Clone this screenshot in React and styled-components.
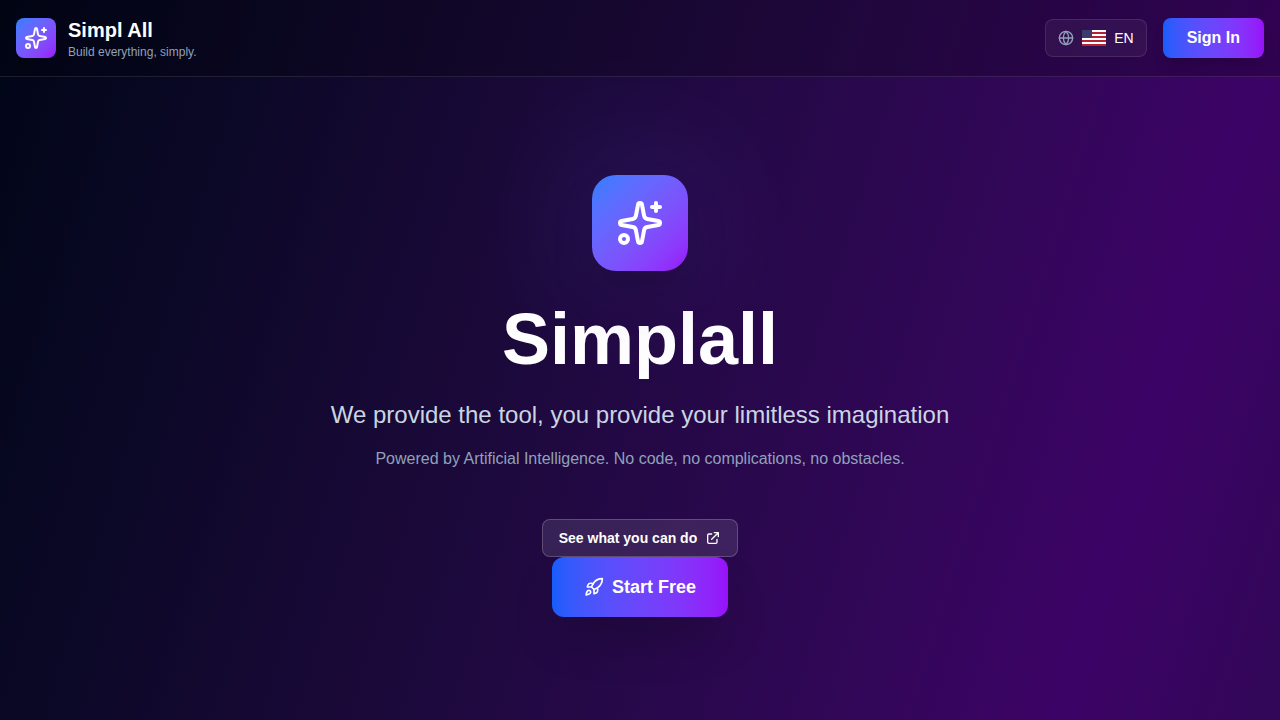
import React from "react";
import styled, { createGlobalStyle } from "styled-components";
import { Sparkles, Globe, Rocket } from "lucide-react";

const GlobalStyle = createGlobalStyle`
  *, *::before, *::after { box-sizing: border-box; }
  body {
    margin: 0;
    font-family: "Liberation Sans", Arial, sans-serif;
    color: #fff;
    background: #020618;
  }
  h1, p { margin: 0; }
  button { font: inherit; color: inherit; border: 0; margin: 0; cursor: pointer; }
`;

const Page = styled.div`
  min-height: 100vh;
  display: flex;
  flex-direction: column;
  overflow: hidden;
  background: linear-gradient(107deg in oklab, #020618 0, #3c0366 1224px, #020618 2448px);
`;

const Header = styled.header`
  display: flex;
  align-items: center;
  justify-content: space-between;
  padding: 16px;
  background: rgba(0, 0, 0, 0.2);
  border-bottom: 1px solid rgba(255, 255, 255, 0.1);
`;

const Brand = styled.div`
  display: flex;
  align-items: center;
  gap: 12px;
`;

const LogoTile = styled.div`
  display: flex;
  align-items: center;
  justify-content: center;
  width: ${(p) => (p.$large ? 96 : 40)}px;
  height: ${(p) => (p.$large ? 96 : 40)}px;
  border-radius: ${(p) => (p.$large ? 24 : 8)}px;
  background: linear-gradient(to bottom right in oklab, #2b7fff, #9810fa);
  box-shadow: ${(p) => (p.$large ? "0 25px 50px -12px rgba(0, 0, 0, 0.25)" : "none")};
`;

const BrandName = styled.div`
  font-size: 20px;
  line-height: 28px;
  font-weight: 700;
`;

const Tagline = styled.div`
  font-size: 12px;
  line-height: 16px;
  color: #90a1b9;
`;

const Actions = styled.div`
  display: flex;
  align-items: center;
  gap: 16px;
`;

const LanguageButton = styled.button`
  display: flex;
  align-items: center;
  gap: 8px;
  padding: 8px 12px;
  border: 1px solid rgba(255, 255, 255, 0.1);
  border-radius: 8px;
  background: rgba(255, 255, 255, 0.05);
  font-size: 14px;
  line-height: 20px;

  > svg:first-child { color: #90a1b9; }
`;

const GradientButton = styled.button`
  display: inline-flex;
  align-items: center;
  justify-content: center;
  gap: 8px;
  padding: ${(p) => (p.$large ? "16px 32px" : "8px 24px")};
  border-radius: ${(p) => (p.$large ? 12 : 8)}px;
  font-size: ${(p) => (p.$large ? 18 : 16)}px;
  line-height: ${(p) => (p.$large ? 28 : 24)}px;
  font-weight: 700;
  background: linear-gradient(to right in oklab, #155dfc, #9810fa);
  box-shadow: ${(p) =>
    p.$large
      ? "0 25px 50px -12px rgba(0, 0, 0, 0.25)"
      : "0 10px 15px -3px rgba(0, 0, 0, 0.1), 0 4px 6px -4px rgba(0, 0, 0, 0.1)"};
`;

const Hero = styled.main`
  flex: 1;
  display: flex;
  flex-direction: column;
  align-items: center;
  padding: 98px 16px;
  text-align: center;
`;

const Emblem = styled.div`
  position: relative;
  margin-bottom: 32px;

  &::before {
    content: "";
    position: absolute;
    inset: 0;
    border-radius: 24px;
    background: linear-gradient(to bottom right in oklab, #2b7fff, #9810fa);
    filter: blur(64px);
    opacity: 0.3;
  }

  > ${LogoTile} { position: relative; }
`;

const Title = styled.h1`
  margin-bottom: 24px;
  font-size: 72px;
  line-height: 72px;
  font-weight: 700;
`;

const Lead = styled.p`
  margin-bottom: 16px;
  font-size: 24px;
  line-height: 32px;
  color: #cad5e2;
`;

const Note = styled.p`
  margin-bottom: 48px;
  font-size: 16px;
  line-height: 24px;
  color: #90a1b9;
`;

const OutlineLink = styled.a`
  display: inline-flex;
  align-items: center;
  gap: 8px;
  padding: 8px 16px;
  border: 1px solid rgba(255, 255, 255, 0.2);
  border-radius: 8px;
  background: rgba(255, 255, 255, 0.1);
  color: #fff;
  font-size: 14px;
  line-height: 20px;
  font-weight: 700;
  text-decoration: none;
`;

function Flag() {
  return (
    <svg width="24" height="16" viewBox="0 0 24 16" shapeRendering="crispEdges" aria-hidden="true">
      <rect width="24" height="16" fill="#b22234" />
      {[0, 4, 8, 12].map((y) => (
        <rect key={y} y={y} width="24" height="2" fill="#fff" />
      ))}
      <rect width="10" height="8" fill="#3c3b6e" />
    </svg>
  );
}

function OpenIcon() {
  return (
    <svg
      width="16"
      height="16"
      viewBox="0 0 24 24"
      fill="none"
      stroke="currentColor"
      strokeWidth="2"
      strokeLinecap="round"
      strokeLinejoin="round"
      aria-hidden="true"
    >
      <path d="M10 6H6a2 2 0 00-2 2v10a2 2 0 002 2h10a2 2 0 002-2v-4M14 4h6m0 0v6m0-6L10 14" />
    </svg>
  );
}

export default function App() {
  return (
    <>
      <GlobalStyle />
      <Page>
        <Header>
          <Brand>
            <LogoTile>
              <Sparkles size={24} />
            </LogoTile>
            <div>
              <BrandName>Simpl All</BrandName>
              <Tagline>Build everything, simply.</Tagline>
            </div>
          </Brand>
          <Actions>
            <LanguageButton type="button">
              <Globe size={16} />
              <Flag />
              <span>EN</span>
            </LanguageButton>
            <GradientButton type="button">Sign In</GradientButton>
          </Actions>
        </Header>
        <Hero>
          <Emblem>
            <LogoTile $large>
              <Sparkles size={48} />
            </LogoTile>
          </Emblem>
          <Title>Simplall</Title>
          <Lead>We provide the tool, you provide your limitless imagination</Lead>
          <Note>Powered by Artificial Intelligence. No code, no complications, no obstacles.</Note>
          <OutlineLink href="#examples">
            See what you can do
            <OpenIcon />
          </OutlineLink>
          <GradientButton type="button" $large>
            <Rocket size={20} />
            Start Free
          </GradientButton>
        </Hero>
      </Page>
    </>
  );
}
